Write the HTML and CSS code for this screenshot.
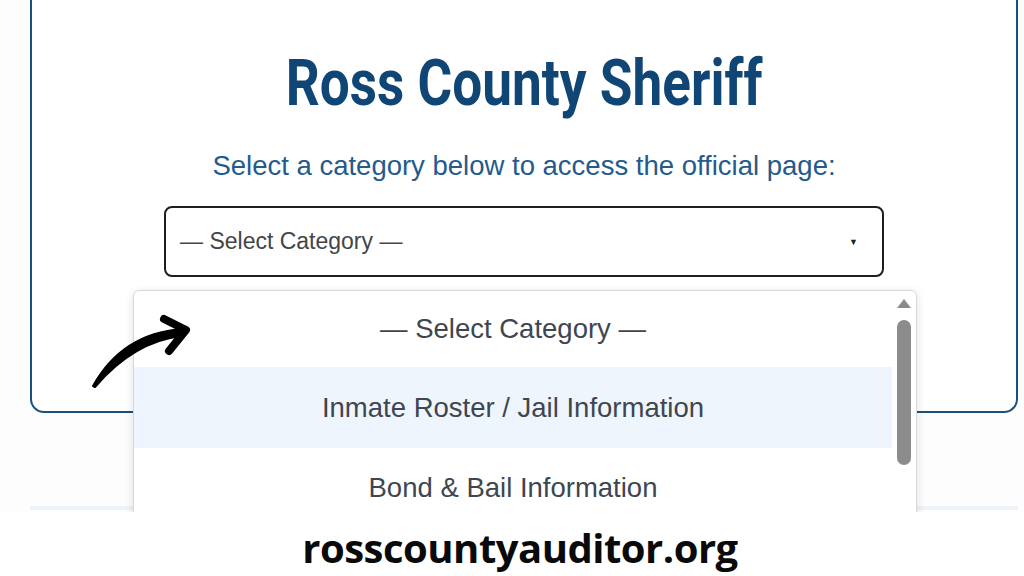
FILE: index.html
```html
<!DOCTYPE html>
<html lang="en">
<head>
<meta charset="utf-8">
<title>Ross County Sheriff</title>
<link rel="stylesheet" href="styles.css">
</head>
<body>
<div class="stage">
  <div class="card">
    <h1 class="title"><span class="title-text">Ross County Sheriff</span></h1>
    <p class="subtitle">Select a category below to access the official page:</p>
    <div class="select">
      <span class="select-text">— Select Category —</span>
      <span class="caret">▼</span>
    </div>
  </div>
  <div class="strip"></div>

  <div class="dropdown">
    <div class="options">
      <div class="option first">— Select Category —</div>
      <div class="option active">Inmate Roster / Jail Information</div>
      <div class="option">Bond &amp; Bail Information</div>
    </div>
    <div class="scrollbar">
      <div class="sb-up"></div>
      <div class="sb-thumb"></div>
    </div>
  </div>

  <svg class="arrow" width="110" height="90" viewBox="0 0 110 90">
    <path d="M3 76 C 22 42, 52 22, 92 19 L 92 26 C 56 30, 28 50, 5 77 Z" fill="#000" stroke="#000" stroke-width="2" stroke-linejoin="round"/>
    <path d="M74 9 L 96 20 L 79 41" fill="none" stroke="#000" stroke-width="8" stroke-linecap="round" stroke-linejoin="round"/>
  </svg>
</div>
<footer class="footer">rosscountyauditor.org</footer>
</body>
</html>
```
FILE: styles.css
```css
html, body {
  margin: 0;
  padding: 0;
}
body {
  width: 1024px;
  height: 576px;
  overflow: hidden;
  background: #ffffff;
  font-family: "Liberation Sans", Arial, sans-serif;
}
.stage {
  position: relative;
  height: 512px;
  overflow: hidden;
  background: #fdfdfe;
}
.card {
  margin-left: 30px;
  width: 984px;
  height: 411px;
  border: 2px solid #1b4f80;
  border-top: none;
  border-radius: 0 0 14px 14px;
  background: #ffffff;
  display: flex;
  flex-direction: column;
  align-items: center;
}
.title {
  margin: 48px 0 0;
  height: 72px;
  line-height: 72px;
  font-family: Roboto, "Liberation Sans", sans-serif;
  font-weight: 700;
  font-size: 64px;
  color: #0f4676;
  white-space: nowrap;
}
.title-text {
  display: inline-block;
  transform: scaleX(0.83);
}
.subtitle {
  margin: 31px 0 0;
  font-size: 27.5px;
  line-height: 30px;
  color: #235b8c;
  white-space: nowrap;
}
.select {
  margin-top: 25px;
  width: 720px;
  height: 71px;
  border: 2px solid #1e1e1e;
  border-radius: 8px;
  display: flex;
  align-items: center;
  justify-content: space-between;
  padding: 0 24px 0 14px;
  box-sizing: border-box;
}
.select-text {
  font-size: 23px;
  color: #454545;
  white-space: nowrap;
}
.caret {
  font-size: 9px;
  color: #222;
}
.strip {
  margin-left: 30px;
  width: 988px;
  height: 4px;
  margin-top: 93px;
  background: #eef3fa;
}
.dropdown {
  position: absolute;
  left: 133px;
  top: 290px;
  width: 782px;
  height: 240px;
  background: #ffffff;
  border: 1px solid #d8d8d8;
  border-radius: 6px 6px 0 0;
  box-shadow: 0 2px 10px rgba(0,0,0,0.12);
  display: flex;
}
.options {
  flex: 1;
  display: flex;
  flex-direction: column;
}
.option {
  height: 79px;
  display: flex;
  align-items: center;
  justify-content: center;
  font-size: 27.5px;
  color: #3e4650;
  border-bottom: 1px solid #f2f4f6;
  white-space: nowrap;
}
.option.first {
  height: 76px;
}
.option.active {
  background: #eff5fd;
}
.scrollbar {
  width: 24px;
  display: flex;
  flex-direction: column;
  align-items: center;
  padding-top: 8px;
}
.sb-up {
  width: 0;
  height: 0;
  border-left: 7px solid transparent;
  border-right: 7px solid transparent;
  border-bottom: 9px solid #8a8a8a;
}
.sb-thumb {
  margin-top: 12px;
  width: 14px;
  height: 145px;
  background: #8c8c8c;
  border-radius: 7px;
}
.arrow {
  position: absolute;
  left: 90px;
  top: 310px;
}
.footer {
  height: 64px;
  box-sizing: border-box;
  padding: 6px 0 0 16px;
  display: flex;
  align-items: center;
  justify-content: center;
  font-family: "Open Sans", "Noto Sans", sans-serif;
  font-weight: 700;
  font-size: 40px;
  color: #0a0a0a;
  letter-spacing: -0.5px;
}
```
